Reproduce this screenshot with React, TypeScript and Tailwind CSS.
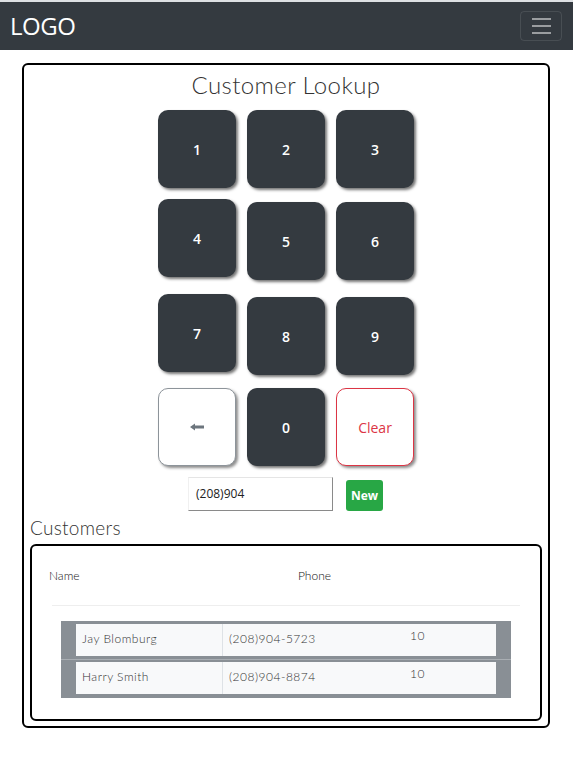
import React from "react";

const body = { fontFamily: "Lato, 'Open Sans', sans-serif" };
const sys = { fontFamily: "'Open Sans', 'Noto Sans', sans-serif" };

function Key({ label, className = "" }: { label: string; className?: string }) {
  return (
    <div
      className={`w-[78px] h-[78px] rounded-[10px] bg-[#343a40] text-white flex items-center justify-center text-[14px] font-semibold shadow-[2px_2px_3px_rgba(0,0,0,0.55)] ${className}`}
      style={sys}
    >
      {label}
    </div>
  );
}

export default function App() {
  const rows = [
    { name: "Jay Blomburg", phone: "(208)904-5723", n: "10" },
    { name: "Harry Smith", phone: "(208)904-8874", n: "10" },
  ];
  return (
    <div className="w-[573px] min-h-[768px] bg-white" style={body}>
      <div className="h-[2px] bg-[#dde0e3]" />
      <div className="h-[48px] bg-[#343a40] flex items-center justify-between pl-[10px] pr-[11px]">
        <span className="text-white text-[24px] tracking-[-0.5px]" style={sys}>LOGO</span>
        <div className="w-[42px] h-[30px] rounded-[4px] border border-white/10 flex flex-col items-center justify-center gap-[5px]">
          <div className="w-[19px] h-[2px] bg-white/50" />
          <div className="w-[19px] h-[2px] bg-white/50" />
          <div className="w-[19px] h-[2px] bg-white/50" />
        </div>
      </div>

      <div className="ml-[22px] mt-[13px] w-[528px] border-2 border-black rounded-[6px] px-[6px] pb-[5px]">
        <div className="text-center text-[24px] font-light text-[#333] leading-[30px] mt-[5px] tracking-[0.4px]">Customer Lookup</div>

        <div className="flex flex-col items-center mt-[10px]">
          <div className="flex gap-[11px] h-[78px]">
            <Key label="1" />
            <Key label="2" />
            <Key label="3" />
          </div>
          <div className="flex gap-[11px] items-start h-[81px] mt-[11px]">
            <Key label="4" />
            <Key label="5" className="mt-[3px]" />
            <Key label="6" className="mt-[3px]" />
          </div>
          <div className="flex gap-[11px] items-start h-[81px] mt-[14px]">
            <Key label="7" />
            <Key label="8" className="mt-[3px]" />
            <Key label="9" className="mt-[3px]" />
          </div>
          <div className="flex gap-[11px] h-[78px] mt-[13px]">
            <div className="w-[78px] h-[78px] rounded-[10px] bg-white border border-[#8d949a] flex items-center justify-center shadow-[2px_2px_3px_rgba(0,0,0,0.45)]">
              <svg width="14" height="8" viewBox="0 0 14 8" className="ml-[-1px]">
                <path d="M0 4 L5 0.5 L5 2.6 L14 2.6 L14 5.4 L5 5.4 L5 7.5 Z" fill="#6c757d" />
              </svg>
            </div>
            <Key label="0" />
            <div className="w-[78px] h-[78px] rounded-[10px] bg-white border border-[#dc3545] text-[#dc3545] flex items-center justify-center text-[14px] shadow-[2px_2px_3px_rgba(0,0,0,0.45)]" style={sys}>
              Clear
            </div>
          </div>
          <div className="flex items-center gap-[13px] mt-[11px] ml-[-1px]">
            <div className="w-[145px] h-[34px] border-b border-r border-[#8a8a8a] border-t border-t-[#e5e5e5] border-l border-l-[#f0f0f0] flex items-center pl-[7px] text-[12px] text-[#222]" style={sys}>
              (208)904
            </div>
            <div className="w-[37px] h-[31px] rounded-[3px] bg-[#28a745] text-white text-[12px] font-bold flex items-center justify-center mt-[3px]" style={sys}>
              New
            </div>
          </div>
        </div>

        <div className="text-[19px] font-light text-[#333] mt-[5px] leading-[24px] tracking-[0.3px]">Customers</div>
        <div className="mt-[4px] border-2 border-black rounded-[6px] h-[177px] pt-[21px]">
          <div className="flex text-[12px] text-[#111] leading-[18px] font-light">
            <span className="ml-[17px] w-[249px]">Name</span>
            <span>Phone</span>
          </div>
          <div className="mx-[20px] mt-[20px] h-px bg-[#eeeeee] w-[468px]" />
          <div className="ml-[29px] mt-[15px] w-[450px] bg-[#898f95]">
            {rows.map((r, i) => (
              <div key={i} className={`px-[15px] ${i === 0 ? "pt-[3px] pb-[3px]" : "border-t border-[#a9aeb3] pt-[2px] pb-[4px]"}`}>
                <div className="flex h-[32px] bg-[#f8f9fa] text-[12px] text-[#333] font-light tracking-[0.5px]">
                  <div className="w-[147px] border-r border-[#dee2e6] pl-[6px] flex items-center pb-[2px]">{r.name}</div>
                  <div className="flex-1 pl-[6px] flex items-center pb-[2px] relative">
                    {r.phone}
                    <span className="absolute left-[187px] top-[3px]">{r.n}</span>
                  </div>
                </div>
              </div>
            ))}
          </div>
        </div>
      </div>
    </div>
  );
}
